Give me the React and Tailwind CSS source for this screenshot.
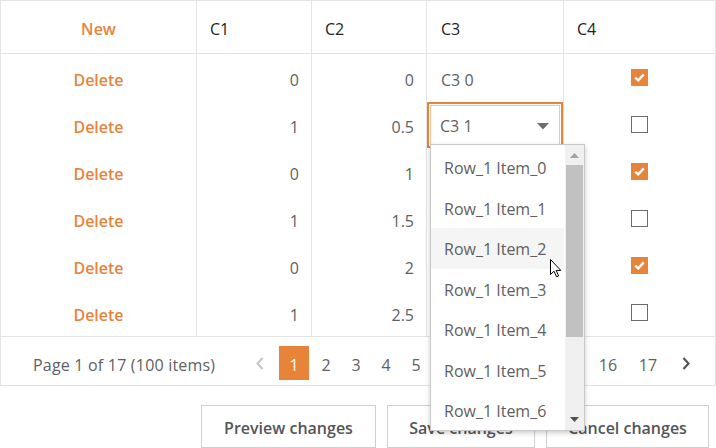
import React from "react";

const rows = [
  { c1: 0, c2: "0", c3: "C3 0", c4: true },
  { c1: 1, c2: "0.5", c3: "C3 1", c4: false },
  { c1: 0, c2: "1", c3: "", c4: true },
  { c1: 1, c2: "1.5", c3: "", c4: false },
  { c1: 0, c2: "2", c3: "", c4: true },
  { c1: 1, c2: "2.5", c3: "", c4: false },
];

const items = [0, 1, 2, 3, 4, 5, 6];

function CheckBox({ checked }) {
  if (checked) {
    return (
      <div className="w-[17px] h-[17px] bg-[#e8833a] flex items-center justify-center">
        <svg width="11" height="9" viewBox="0 0 11 9">
          <path d="M1.2 4.6 L4.2 7.4 L9.8 1.4" fill="none" stroke="#fff" strokeWidth="2.4" />
        </svg>
      </div>
    );
  }
  return <div className="w-[17px] h-[17px] border-[1.5px] border-[#6b6b6b] bg-white" />;
}

function Cursor() {
  return (
    <svg width="13" height="19" viewBox="0 0 13 19" className="absolute left-[550px] top-[259px]">
      <path
        d="M0.5 0.5 L0.5 15.5 L4 12.2 L6.5 17.8 L8.6 16.9 L6.2 11.4 L10.8 11.4 Z"
        fill="#fff"
        stroke="#000"
        strokeWidth="1"
      />
    </svg>
  );
}

export default function App() {
  return (
    <div className="relative w-[716px] h-[448px] bg-white overflow-hidden font-['Open_Sans',sans-serif] text-[16px]">
      <div className="border border-[#e3e3e3]">
        {/* header */}
        <div className="grid grid-cols-[196px_115px_115px_137px_1fr] h-[53px] border-b border-[#e3e3e3]">
          <div className="border-r border-[#e3e3e3] flex items-center justify-center pt-[4px] font-semibold text-[#e8833a]">New</div>
          <div className="border-r border-[#e3e3e3] flex items-center px-[13px] pt-[4px] text-[#1e1e1e]">C1</div>
          <div className="border-r border-[#e3e3e3] flex items-center px-[13px] pt-[4px] text-[#1e1e1e]">C2</div>
          <div className="border-r border-[#e3e3e3] flex items-center px-[14px] pt-[4px] text-[#1e1e1e]">C3</div>
          <div className="flex items-center px-[13px] pt-[4px] text-[#1e1e1e]">C4</div>
        </div>
        {/* rows */}
        {rows.map((r, i) => (
          <div key={i} className="grid grid-cols-[196px_115px_115px_137px_1fr] h-[47px] text-[#5f5f5f]">
            <div className="border-r border-[#e3e3e3] flex items-center justify-center pt-[5px] font-semibold text-[#e8833a]">Delete</div>
            <div className="border-r border-[#e3e3e3] flex items-center justify-end px-[12px] pt-[5px]">{r.c1}</div>
            <div className="border-r border-[#e3e3e3] flex items-center justify-end px-[12px] pt-[5px]">{r.c2}</div>
            {i === 1 ? (
              <div className="border-r border-[#e3e3e3] pt-[1px]">
                <div className="h-[46px] border-2 border-[#e8833a] p-[1px]">
                  <div className="h-full border border-[#f3c4a0] flex items-center justify-between pl-[9px] pr-[10px] pt-[2px]">
                    <span>C3 1</span>
                    <svg width="12" height="7" viewBox="0 0 12 7">
                      <path d="M0 0 L12 0 L6 6.5 Z" fill="#6e6e6e" />
                    </svg>
                  </div>
                </div>
              </div>
            ) : (
              <div className="border-r border-[#e3e3e3] flex items-center px-[14px] pt-[5px]">{r.c3}</div>
            )}
            <div className="flex items-center justify-center">
              <CheckBox checked={r.c4} />
            </div>
          </div>
        ))}
        {/* pager */}
        <div className="h-[49px] border-t border-[#e3e3e3] flex items-start pt-[9px] text-[#5f5f5f]">
          <div className="h-[34px] flex items-center pl-[32px] w-[244px] pt-[3px] tracking-[0.2px]">Page 1 of 17 (100 items)</div>
          <div className="h-[34px] flex items-center">
            <div className="w-[30px] h-[34px] flex items-center justify-center">
              <svg width="8" height="13" viewBox="0 0 8 13">
                <path d="M6.5 1 L1.5 6.5 L6.5 12" fill="none" stroke="#c4c4c4" strokeWidth="2" />
              </svg>
            </div>
            <div className="w-[4px]" />
            <div className="w-[30px] h-[34px] bg-[#e8833a] text-white flex items-center justify-center pt-[3px]">1</div>
            <div className="w-[2px]" />
            {[2, 3, 4, 5].map((n) => (
              <div key={n} className="w-[30px] h-[34px] flex items-center justify-center pt-[3px]">{n}</div>
            ))}
            <div className="w-[157px] h-[34px]" />
            <div className="w-[40px] h-[34px] flex items-center justify-center pt-[3px]">16</div>
            <div className="w-[40px] h-[34px] flex items-center justify-center pt-[3px]">17</div>
            <div className="w-[36px] h-[34px] flex items-center justify-center">
              <svg width="8" height="13" viewBox="0 0 8 13">
                <path d="M1.5 1 L6.5 6.5 L1.5 12" fill="none" stroke="#555" strokeWidth="2.2" />
              </svg>
            </div>
          </div>
        </div>
      </div>

      {/* buttons */}
      <div className="mt-[19px] flex justify-end gap-[11px] pr-[7px]">
        <div className="w-[175px] h-[43px] border border-[#cfcfcf] flex items-center justify-center pt-[2px] font-semibold text-[#555]">Preview changes</div>
        <div className="w-[148px] h-[43px] border border-[#cfcfcf] flex items-center justify-center pt-[2px] font-semibold text-[#555]">Save changes</div>
        <div className="w-[163px] h-[43px] border border-[#cfcfcf] flex items-center justify-center pt-[2px] font-semibold text-[#555]">Cancel changes</div>
      </div>

      {/* dropdown */}
      <div className="absolute left-[430px] top-[144px] w-[155px] h-[287px] bg-white border border-[#c8c8c8] shadow-[0_2px_5px_rgba(0,0,0,0.2)] flex">
        <div className="w-[133px] pt-[2px] text-[#5f5f5f]">
          {items.map((n) => (
            <div
              key={n}
              className={"h-[40.5px] flex items-center pl-[13px] pt-[2px] " + (n === 2 ? "bg-[#f5f5f5]" : "")}
            >
              Row_1 Item_{n}
            </div>
          ))}
        </div>
        <div className="w-[1px]" />
        <div className="flex-1 bg-[#f0f0f0] flex flex-col items-center">
          <div className="h-[20px] flex items-center justify-center">
            <svg width="9" height="5" viewBox="0 0 9 5">
              <path d="M0 5 L4.5 0 L9 5 Z" fill="#a3a3a3" />
            </svg>
          </div>
          <div className="w-[17px] h-[172px] bg-[#c1c1c1]" />
          <div className="flex-1" />
          <div className="h-[22px] flex items-center justify-center">
            <svg width="9" height="5" viewBox="0 0 9 5">
              <path d="M0 0 L9 0 L4.5 5 Z" fill="#505050" />
            </svg>
          </div>
        </div>
      </div>

      <Cursor />
    </div>
  );
}
